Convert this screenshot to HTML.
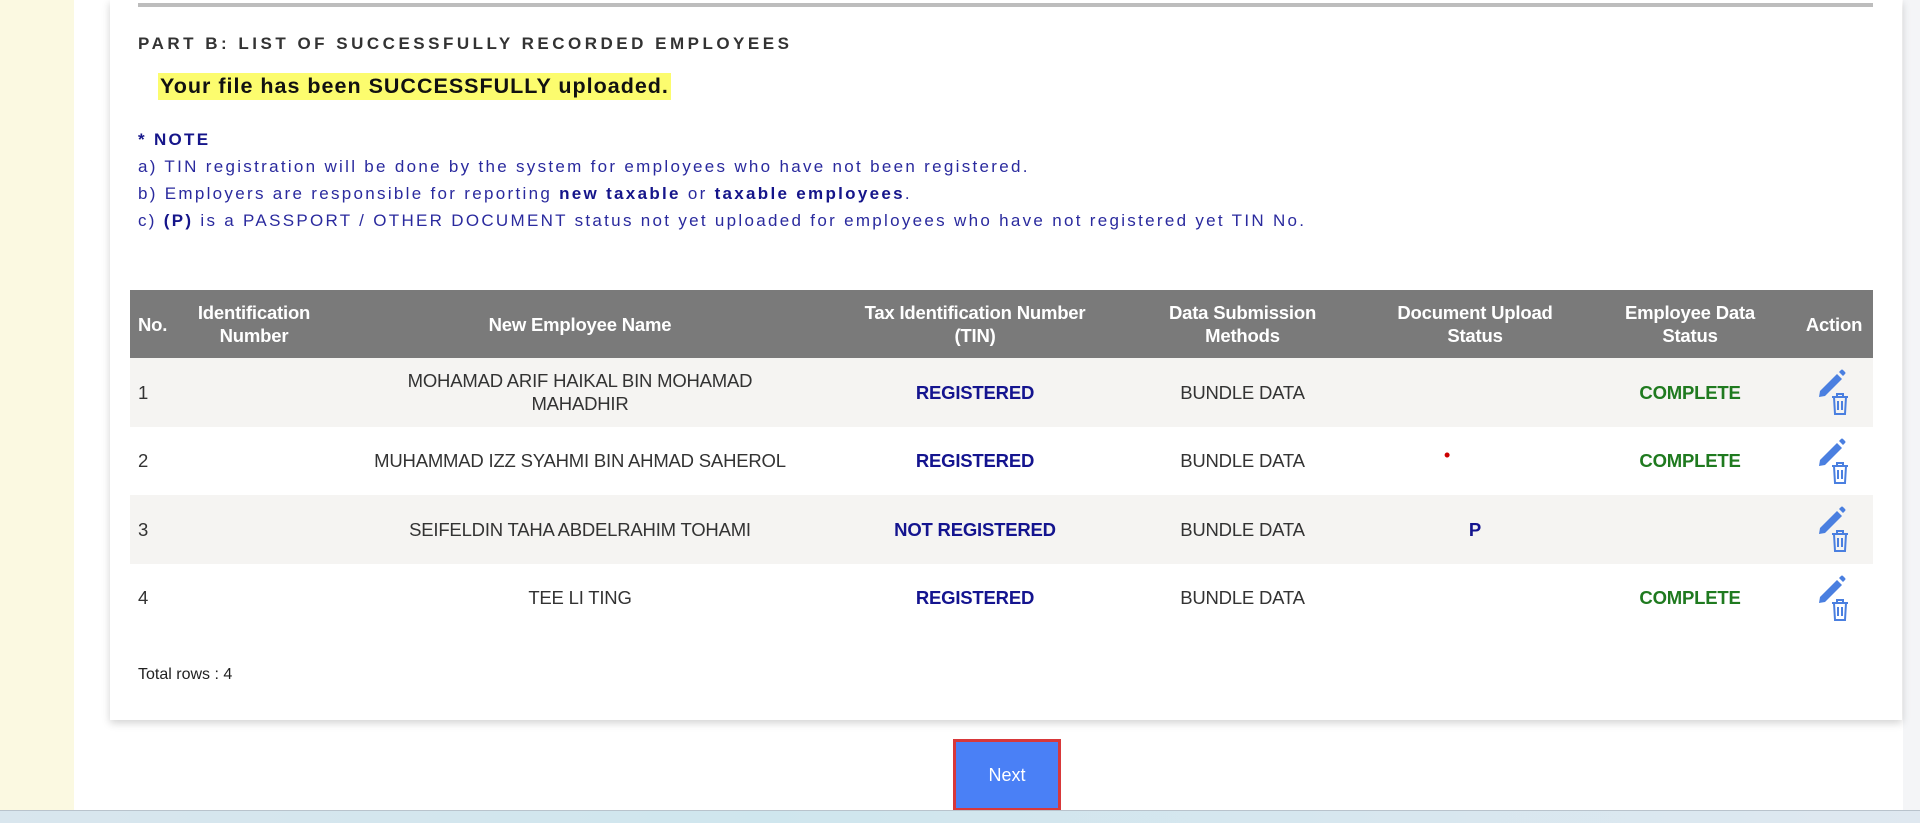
<!DOCTYPE html>
<html><head><meta charset="utf-8"><style>
*{margin:0;padding:0;box-sizing:border-box}
body{width:1920px;height:823px;overflow:hidden;background:#f4f5f7;font-family:"Liberation Sans",Arial,sans-serif;position:relative}
.side{position:absolute;left:0;top:0;width:74px;height:810px;background:#fbf9e1}
.main{position:absolute;left:74px;top:0;width:1829px;height:810px;background:#fff}
.card{position:absolute;left:110px;top:0;width:1792px;height:720px;background:#fff;box-shadow:0 3px 8px rgba(0,0,0,.18)}
.bar{position:absolute;left:138px;top:3px;width:1735px;height:4px;background:#bdbdbd}
.t{position:absolute;white-space:nowrap}
.title{left:138px;top:34px;font-size:17px;font-weight:bold;color:#333;letter-spacing:3.5px}
.ok{left:158px;top:73px;font-size:21.5px;font-weight:bold;color:#111;background:#fcfc6e;padding:1px 2px;letter-spacing:1px}
.note{left:138px;font-size:17px;color:#2a2a9e;letter-spacing:2.3px}
.note b{color:#15158a}
table{position:absolute;left:130px;top:290px;width:1743px;border-collapse:collapse;font-size:18.5px}
th{background:#7a7a7a;color:#fff;font-weight:bold;height:68px;font-size:18.5px;line-height:23px;text-align:center;letter-spacing:-.2px}
td{height:68.5px;text-align:center;color:#333;line-height:23px;letter-spacing:-.2px}
tr.g td{background:#f5f4f2}
.l{text-align:left;padding-left:8px}
.blue{color:#14148f;font-weight:bold}
.green{color:#1f7a1f;font-weight:bold}
.total{left:138px;top:666px;font-size:16px;color:#222}
.btn{position:absolute;left:953px;top:739px;width:108px;height:72px;border:3px solid #d8383a;background:#4a80f6;color:#fff;font-size:18px;text-align:center;line-height:66px}
.task{position:absolute;left:0;top:810px;width:1920px;height:13px;background:linear-gradient(90deg,#d9e6ee,#cfe6ee 40%,#dfe8f0);border-top:1px solid #b9c3cc}
</style></head><body>
<div class="side"></div>
<div class="main"></div>
<div class="card"></div>
<div class="bar"></div>
<div class="t title">PART B: LIST OF SUCCESSFULLY RECORDED EMPLOYEES</div>
<div class="t ok">Your file has been SUCCESSFULLY uploaded.</div>
<div class="t note" style="top:130px"><b>* NOTE</b></div>
<div class="t note" style="top:157px">a) TIN registration will be done by the system for employees who have not been registered.</div>
<div class="t note" style="top:184px">b) Employers are responsible for reporting <b>new taxable</b> or <b>taxable employees</b>.</div>
<div class="t note" style="top:211px">c) <b>(P)</b> is a PASSPORT / OTHER DOCUMENT status not yet uploaded for employees who have not registered yet TIN No.</div>
<table>
<colgroup><col style="width:48px"><col style="width:152px"><col style="width:500px"><col style="width:290px"><col style="width:245px"><col style="width:220px"><col style="width:210px"><col style="width:78px"></colgroup>
<tr><th class="l">No.</th><th>Identification<br>Number</th><th>New Employee Name</th><th>Tax Identification Number<br>(TIN)</th><th>Data Submission<br>Methods</th><th>Document Upload<br>Status</th><th>Employee Data<br>Status</th><th>Action</th></tr>
<tr class="g"><td class="l">1</td><td></td><td>MOHAMAD ARIF HAIKAL BIN MOHAMAD<br>MAHADHIR</td><td class="blue">REGISTERED</td><td>BUNDLE DATA</td><td></td><td class="green">COMPLETE</td><td>ICON</td></tr>
<tr><td class="l">2</td><td></td><td>MUHAMMAD IZZ SYAHMI BIN AHMAD SAHEROL</td><td class="blue">REGISTERED</td><td>BUNDLE DATA</td><td><span style="color:#c00;position:relative;top:-6px;left:-28px">•</span></td><td class="green">COMPLETE</td><td>ICON</td></tr>
<tr class="g"><td class="l">3</td><td></td><td>SEIFELDIN TAHA ABDELRAHIM TOHAMI</td><td class="blue">NOT REGISTERED</td><td>BUNDLE DATA</td><td class="blue">P</td><td></td><td>ICON</td></tr>
<tr><td class="l">4</td><td></td><td>TEE LI TING</td><td class="blue">REGISTERED</td><td>BUNDLE DATA</td><td></td><td class="green">COMPLETE</td><td>ICON</td></tr>
</table>
<div class="t total">Total rows : 4</div>
<div class="btn">Next</div>
<div class="task"></div>
<script>
var svg='<svg width="44" height="56" viewBox="0 0 44 56" style="display:block;margin:0 auto"><path d="M8 27 L25 10 L30 15 L13 32 L7 33 Z" fill="#4a7fe0"/><path d="M27 8 L29 6 Q30 5 31 6 L33 8 Q34 9 33 10 L31 12 Z" fill="#4a7fe0"/><g fill="none" stroke="#4a7fe0" stroke-width="2"><path d="M20 33 H36 M25 33 V30 H31 V33 M22 33 L23 50 H33 L34 33 M26 37 V46 M30 37 V46"/></g></svg>';
document.querySelectorAll('td').forEach(function(t){if(t.textContent=='ICON')t.innerHTML=svg;});
</script>
</body></html>
